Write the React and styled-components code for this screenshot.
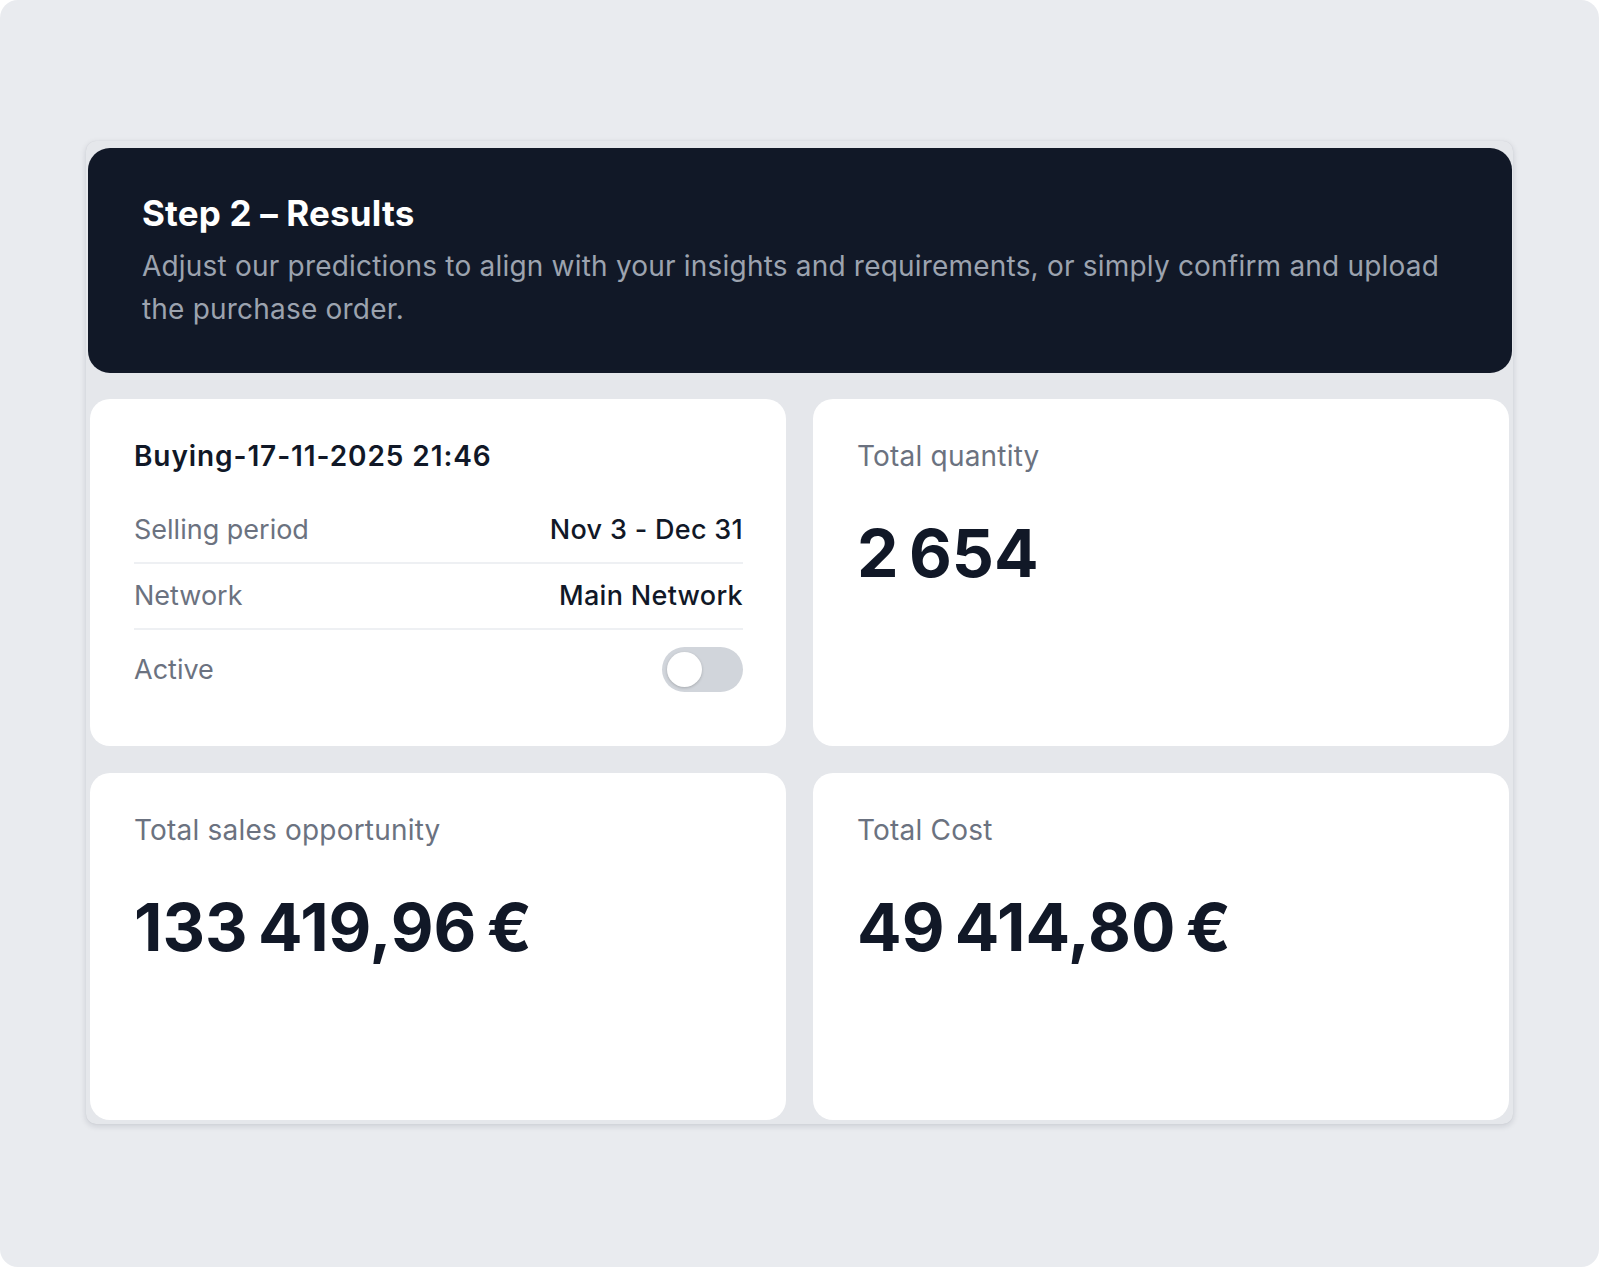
import styled, { createGlobalStyle } from 'styled-components'

const GlobalStyle = createGlobalStyle`
    * { box-sizing: border-box; }
    body {
        margin: 0;
        background: #ffffff;
        font-family: Inter, "Noto Sans", "Liberation Sans", sans-serif;
        -webkit-font-smoothing: antialiased;
    }
`

const summary = {
    name: 'Buying-17-11-2025 21:46',
    rows: [
        { label: 'Selling period', value: 'Nov 3 - Dec 31' },
        { label: 'Network', value: 'Main Network' },
    ],
}

const stats = [
    { label: 'Total quantity', value: '2\u202F654' },
    { label: 'Total sales opportunity', value: '133\u202F419,96\u202F€' },
    { label: 'Total Cost', value: '49\u202F414,80\u202F€' },
]

export default function App() {
    return (
        <>
            <GlobalStyle />
            <Frame>
                <Panel>
                    <Header>
                        <Title>Step 2 – Results</Title>
                        <Subtitle>
                            Adjust our predictions to align with your insights and requirements, or simply confirm and upload the purchase order.
                        </Subtitle>
                    </Header>
                    <Grid>
                        <Card>
                            <CardTitle>{summary.name}</CardTitle>
                            {summary.rows.map(row => (
                                <Row key={row.label}>
                                    <RowLabel>{row.label}</RowLabel>
                                    <RowValue>{row.value}</RowValue>
                                </Row>
                            ))}
                            <Row $last>
                                <RowLabel>Active</RowLabel>
                                <Toggle role="switch" aria-checked="false">
                                    <Knob />
                                </Toggle>
                            </Row>
                        </Card>
                        {stats.map(stat => (
                            <Card key={stat.label}>
                                <StatLabel>{stat.label}</StatLabel>
                                <StatValue>{stat.value}</StatValue>
                            </Card>
                        ))}
                    </Grid>
                </Panel>
            </Frame>
        </>
    )
}

const Frame = styled.div`
    width: 1599px;
    height: 1267px;
    background: #e9ebef;
    border-radius: 18px;
    padding: 141px 0 0 86px;
    overflow: hidden;
`

const Panel = styled.div`
    width: 1427px;
    background: #e5e7eb;
    border-radius: 10px;
    padding: 7px 1px 4px 2px;
    box-shadow: 0 2px 6px rgba(17, 24, 39, 0.14), 0 0 1px rgba(17, 24, 39, 0.1);
`

const Header = styled.header`
    background: #111827;
    border-radius: 22px;
    padding: 48px 60px 42px 54px;
`

const Title = styled.h1`
    margin: 0;
    font-size: 35px;
    line-height: 1;
    font-weight: 700;
    color: #ffffff;
    letter-spacing: 0.005em;
`

const Subtitle = styled.p`
    margin: 14px 0 0;
    font-size: 28px;
    line-height: 43px;
    letter-spacing: 0.2px;
    color: #9ca3af;
`

const Grid = styled.div`
    display: grid;
    grid-template-columns: 1fr 1fr;
    grid-auto-rows: 347px;
    gap: 27px;
    margin: 26px 3px 0 2px;
`

const Card = styled.section`
    background: #ffffff;
    border-radius: 20px;
    padding: 43px 43px 0 44px;
`

const CardTitle = styled.h2`
    margin: 0 0 28px;
    font-size: 28px;
    line-height: 1;
    font-weight: 600;
    letter-spacing: 0.9px;
    color: #111827;
`

const Row = styled.div`
    display: flex;
    align-items: center;
    justify-content: space-between;
    padding: 17px 0;
    border-bottom: ${p => (p.$last ? 'none' : '2px solid #eef0f3')};
`

const RowLabel = styled.span`
    font-size: 27px;
    line-height: 30px;
    color: #6b7280;
`

const RowValue = styled.span`
    font-size: 27px;
    line-height: 30px;
    font-weight: 500;
    letter-spacing: 0.3px;
    color: #111827;
`

const Toggle = styled.div`
    position: relative;
    width: 81px;
    height: 45px;
    border-radius: 999px;
    background: #d1d5db;
`

const Knob = styled.span`
    position: absolute;
    left: 5px;
    top: 5px;
    width: 35px;
    height: 35px;
    border-radius: 50%;
    background: #ffffff;
    box-shadow: 0 1px 3px rgba(0, 0, 0, 0.2);
`

const StatLabel = styled.div`
    font-size: 28px;
    line-height: 28px;
    letter-spacing: 0.2px;
    color: #6b7280;
`

const StatValue = styled.div`
    margin-top: 50px;
    font-size: 66px;
    line-height: 1;
    font-weight: 700;
    color: #111827;
    letter-spacing: -0.035em;
`
